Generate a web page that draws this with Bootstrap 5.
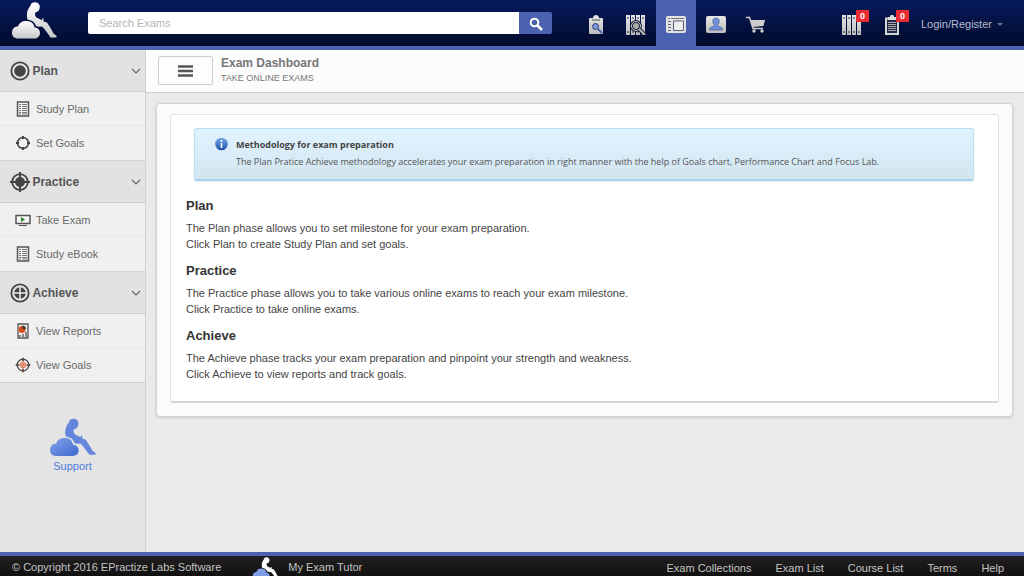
<!DOCTYPE html>
<html lang="en">
<head>
<meta charset="utf-8">
<meta name="viewport" content="width=device-width, initial-scale=1">
<title>Exam Dashboard</title>
<link href="https://cdn.jsdelivr.net/npm/bootstrap@5.3.0/dist/css/bootstrap.min.css" rel="stylesheet">
<style>
body{font-family:"Liberation Sans",Arial,sans-serif;font-size:11px;line-height:16px;color:#444;background:#eaeaea}
a{text-decoration:none}
.topbar{background:linear-gradient(#061a5c,#020b2b);border-bottom:4px solid #4a62b0;height:50px}
.brand{width:88px;padding-left:11px}
.search-box .form-control{font-size:11px;line-height:16px;min-height:0;padding:3px 11px;border:0;border-radius:2px 0 0 2px;color:#444;height:22px}
.search-box .form-control::placeholder{color:#b4b4b4}
.search-box .btn{width:33px;height:22px;padding:0;border:0;border-radius:0 2px 2px 0;background:#4a62b0;line-height:1}
.top-link{width:40px;height:46px;display:flex;align-items:center;justify-content:center;padding-top:4px}
.top-link.active{background:#4a62b0}
.count{position:absolute;top:10px;left:24px;width:13px;height:12px;padding:0;border-radius:1px;background:#ec2b33;font-size:9px;line-height:12px}
.login{color:#b6bccd;width:104px;padding:2px 0 0 1px}
.login .arrow{border:3px solid transparent;border-top-color:#6d7388;margin:3px 0 0 5px}
.side{width:146px;background:#e4e4e4;border-right:1px solid #d2d2d2}
.side h2{height:42px;margin:0;padding:0 4px 0 10px;background:#e2e2e2;border-bottom:1px solid #cfcfcf;font-size:12px;line-height:16px}
.side h2 button{background:none;border:0;padding:0;font-weight:bold;color:#555;text-align:left}
.side li a{display:flex;align-items:center;gap:5px;height:34px;padding-left:15px;color:#6b6b6b;background:#f0f0f0;border-bottom:1px solid #e6e6e6}
.side li:last-child a{height:35px;border-bottom-color:#d2d2d2}
.support{margin-top:33px;color:#4f7ade}
.titlebar{height:43px;background:#fcfcfc;border-bottom:1px solid #d0d0d0;padding:6px 0 0 12px}
.menu-btn{width:55px;height:29px;padding:0;border:1px solid #ccc;border-radius:2px;background:#fdfdfd;line-height:1}
.titlebar h1{font-size:12px;line-height:14px;font-weight:bold;color:#777;margin:0}
.titlebar p{font-size:9px;line-height:16px;color:#777;margin:0}
.content-area{padding:10px 11px 12px 10px}
.outer-panel{background:#fbfbfb;border:1px solid #d2d2d2;border-radius:4px;padding:10px 13px 13px;box-shadow:0 1px 3px rgba(0,0,0,.12)}
.inner-panel{background:#fff;border:1px solid #e2e2e2;border-bottom:2px solid #d6d6d6;border-radius:3px;padding:13px 16px 19px 15px}
.notice{margin:0 8px 16px;height:53px;padding:7px 20px;border:1px solid #b9e0f5;border-bottom:2px solid #a5d2ef;border-radius:3px;background:linear-gradient(#e0f3ff,#d2e5ef);color:#555;font-family:"Open Sans",sans-serif;font-size:9px;line-height:17px;box-shadow:0 1px 2px rgba(0,0,0,.1)}
.notice strong{color:#444}
.inner-panel h2{font-size:13px;line-height:17px;font-weight:bold;color:#333;margin:0 0 6px}
.inner-panel .phase{margin-bottom:10px}
.site-footer{border-top:4px solid #4a62b0;background:linear-gradient(#231f20,#111);height:24px;color:#c4c4c4;padding:0 20px 0 12px}
.site-footer a{color:#c4c4c4}
.site-footer span{padding-top:3px}
.tutor{margin-left:31px}
.site-footer nav{gap:24px;padding-top:4px}
</style>
</head>
<body class="d-flex flex-column min-vh-100">
<svg width="0" height="0" class="position-absolute" aria-hidden="true">
<defs>
<linearGradient id="silver" x2="0" y2="1"><stop stop-color="#fff"/><stop offset="1" stop-color="#c9c9c9"/></linearGradient>
<linearGradient id="blue" x2="1" y2="1"><stop stop-color="#86a3ea"/><stop offset="1" stop-color="#3c69d0"/></linearGradient>
<linearGradient id="metal" x2="0" y2="1"><stop stop-color="#e6e6e6"/><stop offset="1" stop-color="#bdbdbd"/></linearGradient>
<symbol id="cloud" viewBox="0 0 46 40"><path d="M7 38.500C3 38.500 1 36 1 33c0-4 2-6.500 6-6.500C8 23 11 21 15.500 21c4.500 0 7.500 2.500 8 6.500 3.500 0 5.500 2.500 5.500 5.500 0 3.500-2.500 5.500-6 5.500z"/></symbol>
<symbol id="person" viewBox="0 0 46 40"><path d="M19.500 5.500C20 1 28.500 1 28.800 6.500c0 3-1.300 5.500-4.300 5.700-.8 1.800-.7 3.500 1 5.300l5.500 2.700.5-2 1 .2v3l3.500 1.200c2 3 4.500 7 6.500 10.800l3 2.300v1.700h-6c-3-4-5.500-8-8.500-10.800-2.500.3-4.500 0-6-.6-1-3.500-3.500-5.500-8.500-6.500-1.300-5-.5-9.500 3-14z"/></symbol>
<symbol id="books" viewBox="0 0 20 20"><path fill="url(#metal)" d="M0 0h4v20H0zM5 0h4v20H5zM10 0h4v20h-4zM15 0h4v20h-4z"/><path d="M1 3h2M6 3h2M11 3h2M16 3h2M1 17h2M6 17h2M11 17h2M16 17h2" stroke="#222b48"/></symbol>
<symbol id="sheet" viewBox="0 0 14 16"><path d="M1.500 1h11v14h-11z" fill="#f6f6f6" stroke="#555" stroke-width="1.500"/><path d="M3 3.500h2M6 3.500h5M3 5.500h2M6 5.500h5M3 7.500h2M6 7.500h5M3 9.500h2M6 9.500h5M3 11.500h2M6 11.500h5M3 13h2M6 13h5" stroke="#777"/></symbol>
<symbol id="chev" viewBox="0 0 10 6"><path d="M1 1l4 4 4-4" fill="none" stroke="#666" stroke-width="1.200"/></symbol>
</defs>
</svg>

<header class="topbar d-flex align-items-start">
  <a class="brand" href="#" aria-label="Home"><svg class="d-block" width="46" height="40"><use href="#cloud" fill="url(#silver)"/><use href="#person" fill="url(#silver)"/></svg></a>
  <form class="search-box input-group flex-nowrap flex-grow-1 w-auto me-4 align-self-center">
    <input class="form-control" type="text" placeholder="Search Exams" aria-label="Search Exams">
    <button class="btn" type="button" aria-label="Search"><svg width="14" height="14" fill="none" stroke="#fff" stroke-width="2"><circle cx="5.500" cy="5.500" r="3.800"/><path d="M8 8l5 5" stroke-width="2.500"/></svg></button>
  </form>
  <nav class="d-flex" aria-label="Main">
    <a class="top-link" href="#" aria-label="Find exam"><svg width="14" height="20"><path fill="url(#metal)" d="M1 3h3c0-4 6-4 6 0h3q1 0 1 1v14q0 1-1 1H1q-1 0-1-1V4q0-1 1-1z"/><path d="M3 5h8" stroke="#555"/><circle cx="6.500" cy="11.500" r="3" fill="#7895dd" stroke="#33416c"/><path d="M9 14l4 4" stroke="#4a62b0" stroke-width="2"/></svg></a>
    <a class="top-link" href="#" aria-label="Browse collections"><svg width="20" height="20"><use href="#books"/><circle cx="10" cy="11" r="4.500" fill="#aaa" stroke="#151d38" stroke-width="3"/><circle cx="10" cy="11" r="4.500" fill="none" stroke="#ccc"/><path d="M13 14l6 6" stroke="#151d38" stroke-width="4"/><path d="M13 14l6 6" stroke="#bbb" stroke-width="2"/></svg></a>
    <a class="top-link active" href="#" aria-label="Dashboard"><svg width="20" height="18"><rect width="20" height="17" rx="2" fill="#e2e2e2"/><path d="M2 2.500h2M5 2.500h13" stroke="#777"/><path d="M2 5.500h3M2 8.500h3M2 11.500h3M2 14.500h3" stroke="#667"/><path d="M7.500 5h10v9.500h-10z" fill="#eee" stroke="#555e7a"/></svg></a>
    <a class="top-link" href="#" aria-label="Profile"><svg width="20" height="18"><rect width="20" height="17" rx="2" fill="url(#metal)"/><path d="M10 2c4.500 0 3.500 5.500 1.500 7 0 2 5 1 5 5h-13c0-4 5-3 5-5C6.500 7.500 5.500 2 10 2z" fill="#6f8fdc" stroke="#46598c" stroke-width=".7"/></svg></a>
    <a class="top-link" href="#" aria-label="Cart"><svg width="20" height="18"><path d="M0 1.500h3.500l3.500 11h10" fill="none" stroke="#ccc" stroke-width="1.500"/><path d="M4.500 4H19l-1.500 6-11 1z" fill="#ccc"/><circle cx="8" cy="15" r="1.700" fill="#ccc"/><circle cx="16" cy="15" r="1.700" fill="#ccc"/></svg></a>
  </nav>
  <nav class="d-flex ms-5 ps-2" aria-label="Account">
    <a class="top-link position-relative" href="#" aria-label="My exams"><svg width="20" height="20"><use href="#books"/></svg><span class="count badge">0</span></a>
    <a class="top-link position-relative" href="#" aria-label="My results"><svg width="14" height="20"><path d="M1 3.500h12V19H1z" fill="#202a45" stroke="#d4d4d4" stroke-width="2"/><path d="M3 5V2h2c0-3 4-3 4 0h2v3z" fill="#ddd"/><path d="M3 7.500h8M3 9.500h8M3 11.500h8M3 13.500h8M3 15.500h8" stroke="#aaa"/></svg><span class="count badge">0</span></a>
  </nav>
  <a class="login ms-2 d-flex align-items-center align-self-center" href="#">Login/Register<span class="arrow"></span></a>
</header>

<div class="d-flex flex-grow-1">
  <aside class="side flex-shrink-0">
    <h2 class="d-flex"><button class="d-flex align-items-center w-100" type="button"><svg width="20" height="20"><circle cx="10" cy="10" r="8.700" fill="none" stroke="#444" stroke-width="1.800"/><circle cx="10" cy="10" r="5.800" fill="#444"/></svg><span class="flex-grow-1">&thinsp;Plan</span><svg width="10" height="6"><use href="#chev"/></svg></button></h2>
    <ul class="list-unstyled m-0">
      <li><a href="#"><svg width="16" height="16"><use href="#sheet"/></svg>Study Plan</a></li>
      <li><a href="#"><svg width="16" height="16" fill="none" stroke="#444"><circle cx="8" cy="8" r="5.500" stroke-width="1.500"/><path d="M8 1v3M8 12v3M1 8h3M12 8h3" stroke-width="2"/></svg>Set Goals</a></li>
    </ul>
    <h2 class="d-flex"><button class="d-flex align-items-center w-100" type="button"><svg width="20" height="20"><circle cx="10" cy="10" r="7.800" fill="none" stroke="#444" stroke-width="1.800"/><circle cx="10" cy="10" r="5" fill="#444"/><path d="M10 0v20M0 10h20" stroke="#444" stroke-width="2"/></svg><span class="flex-grow-1">&thinsp;Practice</span><svg width="10" height="6"><use href="#chev"/></svg></button></h2>
    <ul class="list-unstyled m-0">
      <li><a href="#"><svg width="16" height="16"><path d="M1 3.500h14v8H1z" fill="#f5f5f5" stroke="#555" stroke-width="1.500"/><path d="M4 13.500h8" stroke="#555"/><path d="M6 5l4 2.500L6 10z" fill="#258a20"/></svg>Take Exam</a></li>
      <li><a href="#"><svg width="16" height="16"><use href="#sheet"/></svg>Study eBook</a></li>
    </ul>
    <h2 class="d-flex"><button class="d-flex align-items-center w-100" type="button"><svg width="20" height="20"><circle cx="10" cy="10" r="8.700" fill="none" stroke="#444" stroke-width="1.800"/><circle cx="10" cy="10" r="5.800" fill="#444"/><path d="M10 3v14M3 10h14" stroke="#eee" stroke-width="1.500"/></svg><span class="flex-grow-1">&thinsp;Achieve</span><svg width="10" height="6"><use href="#chev"/></svg></button></h2>
    <ul class="list-unstyled m-0">
      <li><a href="#"><svg width="16" height="16"><path d="M3 1h10v14H3z" fill="#eee" stroke="#555" stroke-width="1.300"/><circle cx="7" cy="6.500" r="3.500" fill="#d9501e"/><path d="M7.500 6V2.500a4 4 0 0 1 3.500 3.500z" fill="#333"/><path d="M5 14v-2M8 14v-3M11 14V9" stroke="#666" stroke-width="1.500"/></svg>View Reports</a></li>
      <li><a href="#"><svg width="16" height="16" fill="none" stroke="#444"><circle cx="8" cy="8" r="5.800" stroke-width="1.300"/><circle cx="8" cy="8" r="3" fill="#f3b49f" stroke="#e28465"/><path d="M8 0v16M0 8h16" stroke="#d07050" stroke-width=".8"/><path d="M8 1v3M8 12v3M1 8h3M12 8h3" stroke-width="1.500"/></svg>View Goals</a></li>
    </ul>
    <a class="support d-flex flex-column align-items-center" href="#"><svg width="47" height="42"><use href="#cloud" width="47" height="42" fill="url(#blue)"/><use href="#person" width="47" height="42" fill="#6486dc"/></svg><span>Support</span></a>
  </aside>

  <main class="flex-grow-1">
    <div class="titlebar d-flex align-items-start">
      <button class="menu-btn btn me-2 d-flex align-items-center justify-content-center" type="button" aria-label="Toggle menu"><svg width="15" height="12"><path d="M0 1.500h15M0 6h15M0 10.500h15" stroke="#555" stroke-width="2.500"/></svg></button>
      <div><h1>Exam Dashboard</h1><p>TAKE ONLINE EXAMS</p></div>
    </div>
    <div class="content-area">
      <section class="outer-panel">
        <div class="inner-panel">
          <div class="notice d-flex" role="note">
            <svg class="flex-shrink-0 me-2" width="13" height="16"><defs><linearGradient id="inf" x2="0" y2="1"><stop stop-color="#78a9e6"/><stop offset="1" stop-color="#1a50ae"/></linearGradient></defs><circle cx="6.500" cy="8" r="6.300" fill="url(#inf)"/><path d="M6.500 4v2M6.500 7v5" stroke="#fff" stroke-width="1.600"/></svg>
            <div><strong>Methodology for exam preparation</strong><br>The Plan Pratice Achieve methodology accelerates your exam preparation in right manner with the help of Goals chart, Performance Chart and Focus Lab.</div>
          </div>
          <div class="phase"><h2>Plan</h2>The Plan phase allows you to set milestone for your exam preparation.<br>Click Plan to create Study Plan and set goals.</div>
          <div class="phase"><h2>Practice</h2>The Practice phase allows you to take various online exams to reach your exam milestone.<br>Click Practice to take online exams.</div>
          <div class="phase mb-0"><h2>Achieve</h2>The Achieve phase tracks your exam preparation and pinpoint your strength and weakness.<br>Click Achieve to view reports and track goals.</div>
        </div>
      </section>
    </div>
  </main>
</div>

<footer class="site-footer d-flex align-items-start overflow-hidden">
  <span>© Copyright 2016 EPractize Labs Software</span>
  <a class="tutor d-flex" href="#"><svg class="me-2" width="28" height="24"><use href="#cloud" width="28" height="24" fill="#7c9ce6"/><use href="#person" width="28" height="24" fill="#fff"/></svg><span>My Exam Tutor</span></a>
  <nav class="d-flex ms-auto" aria-label="Footer"><a href="#">Exam Collections</a><a href="#">Exam List</a><a href="#">Course List</a><a href="#">Terms</a><a href="#">Help</a></nav>
</footer>
<script src="https://cdn.jsdelivr.net/npm/bootstrap@5.3.0/dist/js/bootstrap.bundle.min.js"></script>
</body>
</html>
